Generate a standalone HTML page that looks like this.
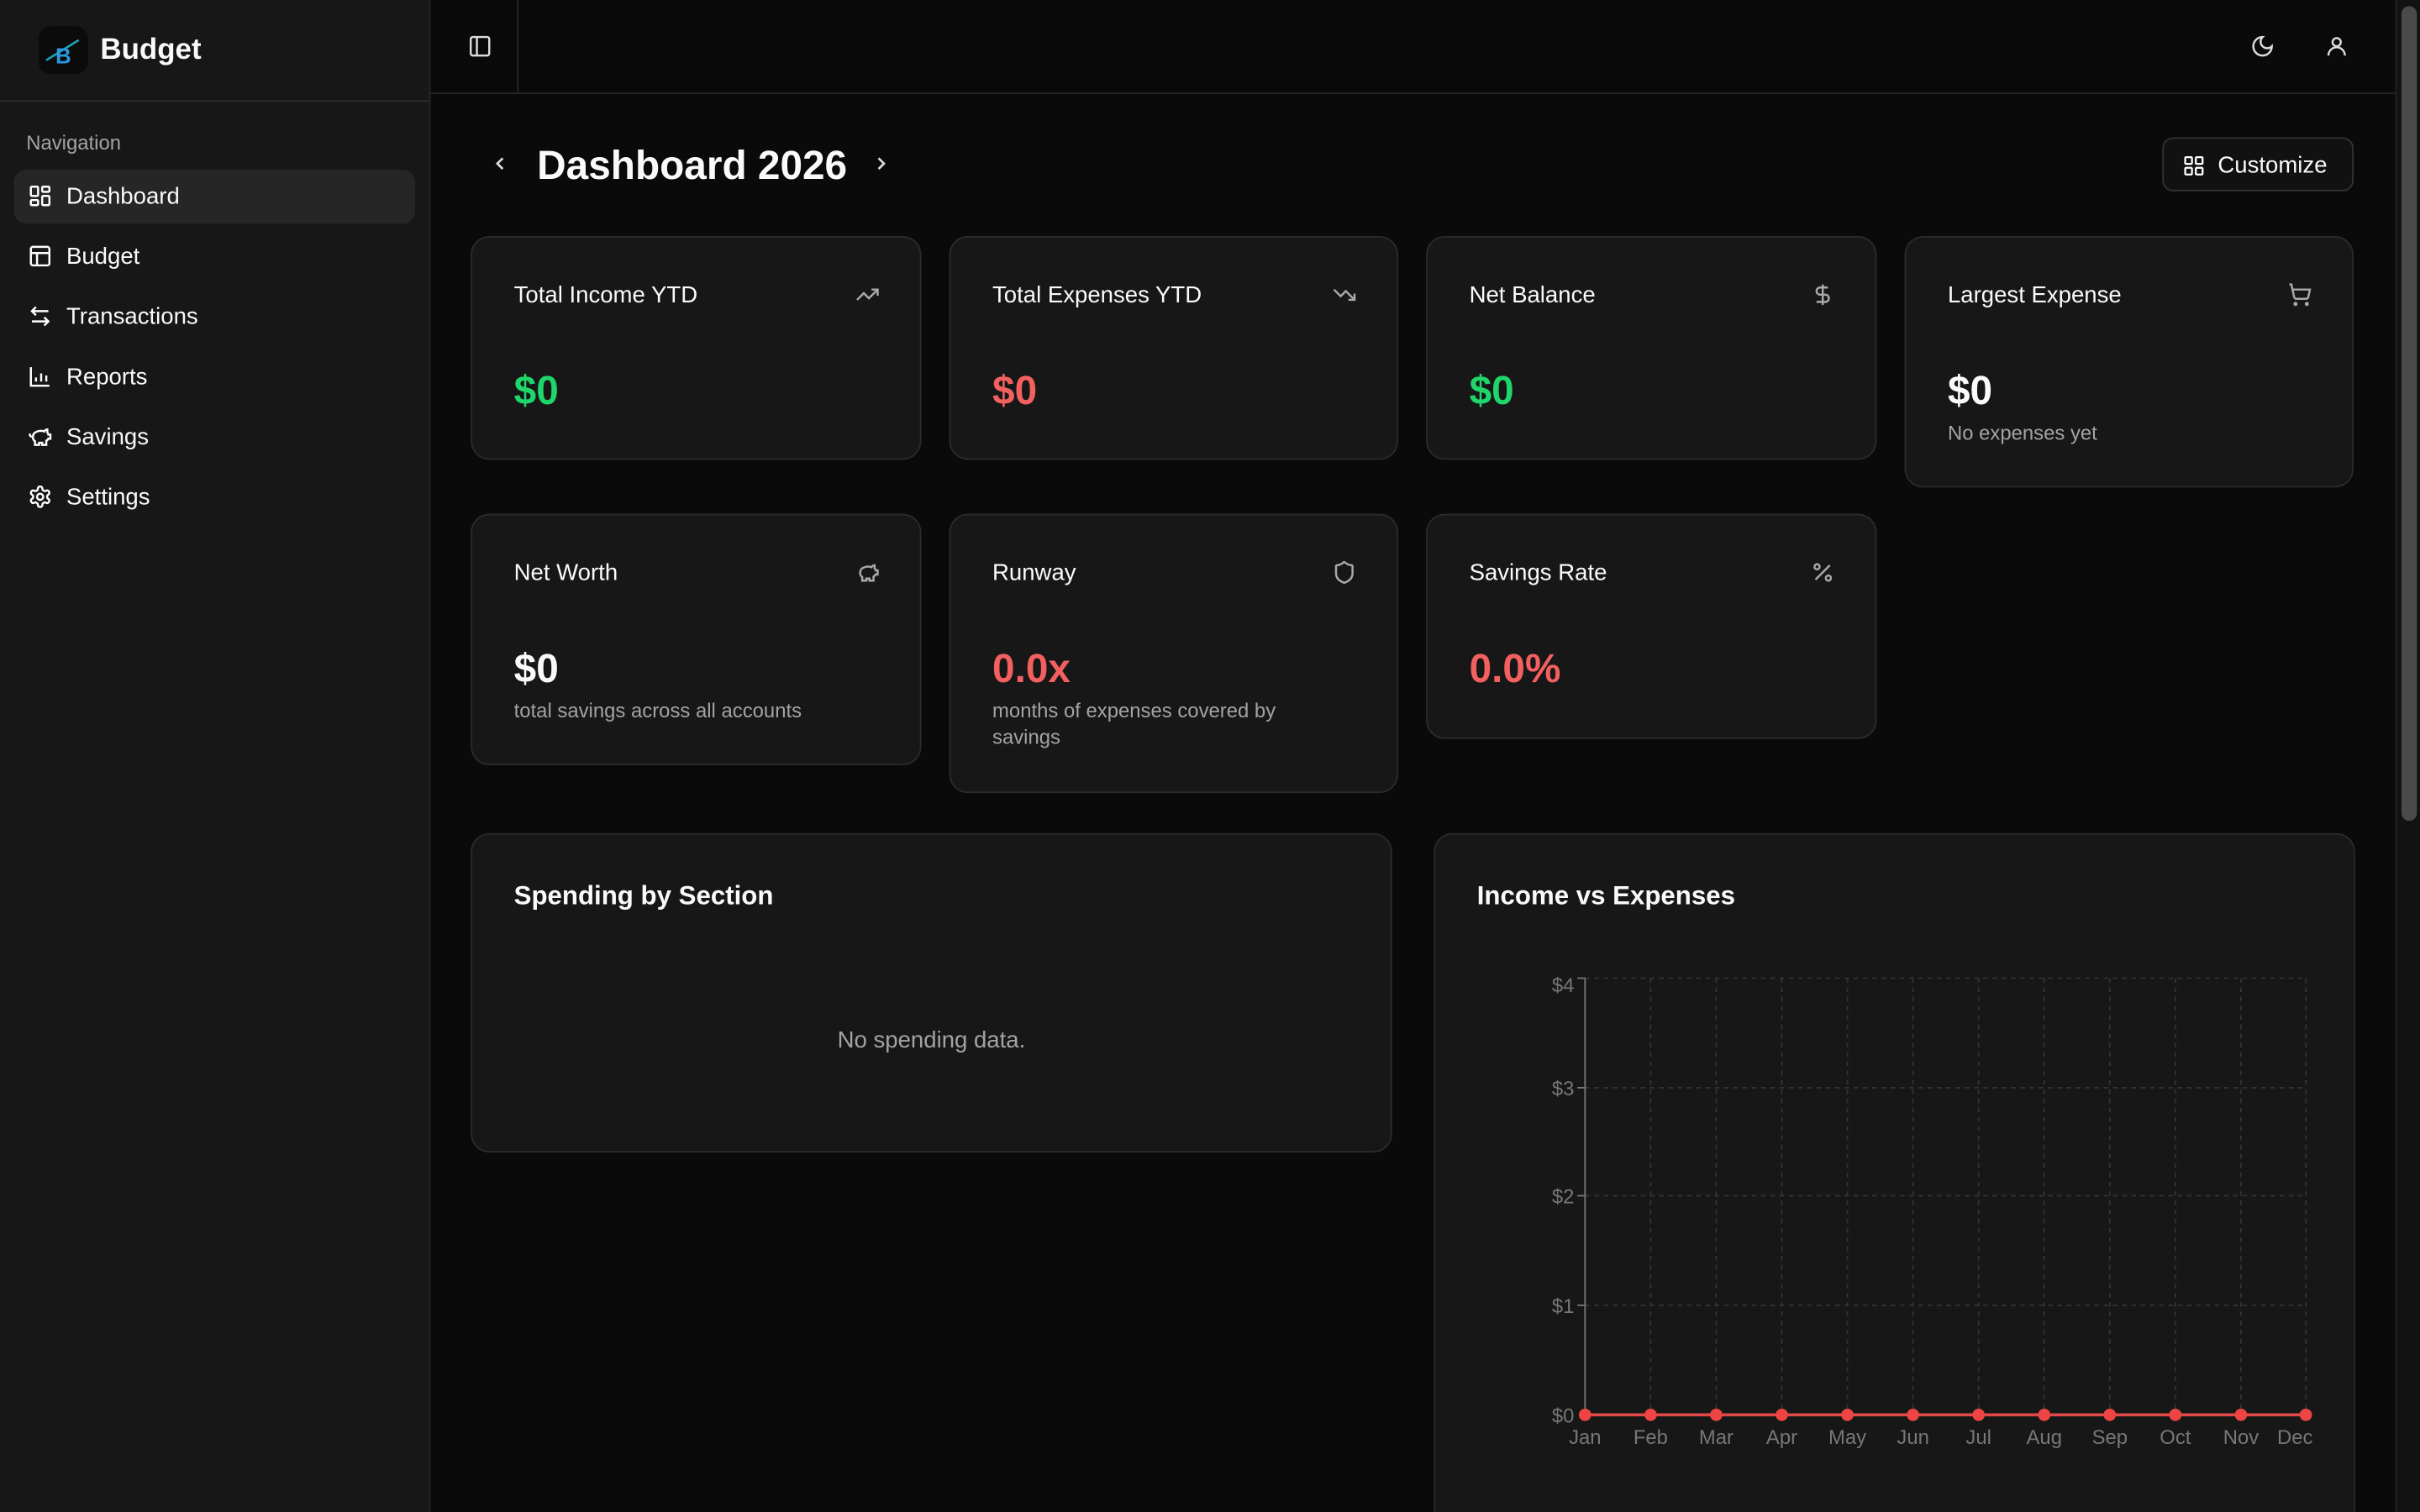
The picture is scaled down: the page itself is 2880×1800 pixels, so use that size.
<!DOCTYPE html>
<html><head><meta charset="utf-8"><style>
*{box-sizing:border-box;margin:0;padding:0}
html,body{width:2880px;height:1800px;overflow:hidden;background:#0a0a0a}
#w{width:1568px;height:980px;transform:scale(1.836735);transform-origin:0 0;position:relative;font-family:"Liberation Sans",sans-serif;color:#fafafa;background:#0a0a0a}
.sb{position:absolute;left:0;top:0;width:279px;height:980px;background:#171717;border-right:1px solid #262626}
.logo{position:absolute;left:25px;top:17px;width:32px;height:31px;background:#0b0b0b;border-radius:8px}
.brand{position:absolute;left:65px;top:22px;font-size:19px;font-weight:bold}
.sbline{position:absolute;left:0;top:65px;width:278px;border-top:1px solid #2e2e2e}
.navl{position:absolute;left:17px;top:85px;font-size:13px;color:#a3a3a3}
.it{position:absolute;left:9px;width:260px;height:35px;border-radius:8px;font-size:15px;display:flex;align-items:center;padding-left:34px}
.it svg{position:absolute;left:9px;top:9px}
.act{background:#262626}
.hdr{position:absolute;left:279px;top:0;right:16px;height:61px;border-bottom:1px solid #262626}
.card{position:absolute;background:#171717;border:1px solid #2b2b2b;border-radius:12px}
.ct{position:absolute;left:27px;top:29px;font-size:15px}
.cv{position:absolute;left:27px;top:84px;font-size:26px;font-weight:bold}
.cs{position:absolute;left:27px;top:118px;font-size:13px;color:#a3a3a3;line-height:17px}
.ci{position:absolute;right:26px;top:29px}
.g{color:#1fd66a}.r{color:#f36060}
.scroll{position:absolute;right:0;top:0;width:16px;height:980px;background:#121212;border-left:1px solid #222}
.thumb{position:absolute;left:3px;top:4px;width:10px;height:528px;border-radius:5px;background:#4a4a4a}
</style></head><body><div id="w">
<div class="sb">
 <div class="logo"><svg width="32" height="31" viewBox="0 0 32 31"><line x1="5" y1="22" x2="26" y2="9" stroke="#1aa0b0" stroke-width="1.5"/><text x="11" y="24" font-size="14" font-weight="bold" fill="#2a9ae0" font-family="Liberation Sans">B</text></svg></div>
 <div class="brand">Budget</div>
 <div class="sbline"></div>
 <div class="navl">Navigation</div>
 <div class="it act" style="top:110px"><svg width="16" height="16" viewBox="0 0 24 24" fill="none" stroke="#fff" stroke-width="2"><rect x="3" y="3" width="7" height="9" rx="1"/><rect x="14" y="3" width="7" height="5" rx="1"/><rect x="14" y="12" width="7" height="9" rx="1"/><rect x="3" y="16" width="7" height="5" rx="1"/></svg>Dashboard</div>
 <div class="it" style="top:149px"><svg width="16" height="16" viewBox="0 0 24 24" fill="none" stroke="#fff" stroke-width="2"><rect x="3" y="3" width="18" height="18" rx="2"/><path d="M3 9h18M9 9v12"/></svg>Budget</div>
 <div class="it" style="top:188px"><svg width="16" height="16" viewBox="0 0 24 24" fill="none" stroke="#fff" stroke-width="2"><path d="M8 3 4 7l4 4M4 7h16M16 21l4-4-4-4M20 17H4"/></svg>Transactions</div>
 <div class="it" style="top:227px"><svg width="16" height="16" viewBox="0 0 24 24" fill="none" stroke="#fff" stroke-width="2"><path d="M3 3v18h18M8 17v-4M13 17V9M18 17v-6"/></svg>Reports</div>
 <div class="it" style="top:266px"><svg width="16" height="16" viewBox="0 0 24 24" fill="none" stroke="#fff" stroke-width="2"><path d="M19 5c-1.5 0-2.8 1.4-3 2-3.5-1.5-11-.3-11 5 0 1.8 0 3 2 4.5V20h4v-2h3v2h4v-4c1-.5 1.7-1 2-2h2v-4h-2c0-1-.5-1.5-1-2V5zM2 9v1c0 1.1.9 2 2 2h1"/></svg>Savings</div>
 <div class="it" style="top:305px"><svg width="16" height="16" viewBox="0 0 24 24" fill="none" stroke="#fff" stroke-width="2"><circle cx="12" cy="12" r="3"/><path d="M12.2 2h-.4a2 2 0 0 0-2 2v.2a2 2 0 0 1-1 1.7l-.4.3a2 2 0 0 1-2 0l-.2-.1a2 2 0 0 0-2.7.7l-.2.4a2 2 0 0 0 .7 2.7l.2.1a2 2 0 0 1 1 1.7v.5a2 2 0 0 1-1 1.7l-.2.1a2 2 0 0 0-.7 2.7l.2.4a2 2 0 0 0 2.7.7l.2-.1a2 2 0 0 1 2 0l.4.3a2 2 0 0 1 1 1.7v.2a2 2 0 0 0 2 2h.4a2 2 0 0 0 2-2v-.2a2 2 0 0 1 1-1.7l.4-.3a2 2 0 0 1 2 0l.2.1a2 2 0 0 0 2.7-.7l.2-.4a2 2 0 0 0-.7-2.7l-.2-.1a2 2 0 0 1-1-1.7v-.5a2 2 0 0 1 1-1.7l.2-.1a2 2 0 0 0 .7-2.7l-.2-.4a2 2 0 0 0-2.7-.7l-.2.1a2 2 0 0 1-2 0l-.4-.3a2 2 0 0 1-1-1.7V4a2 2 0 0 0-2-2z"/></svg>Settings</div>
</div>
<div class="hdr">
 <div style="position:absolute;left:56px;top:0;height:60px;border-left:1px solid #262626"></div>
 <svg style="position:absolute;left:24px;top:22px" width="16" height="16" viewBox="0 0 24 24" fill="none" stroke="#ddd" stroke-width="2"><rect x="3" y="3" width="18" height="18" rx="2"/><path d="M9 3v18"/></svg>
 <svg style="position:absolute;left:1179px;top:22px" width="16" height="16" viewBox="0 0 24 24" fill="none" stroke="#ddd" stroke-width="2"><path d="M12 3a6 6 0 0 0 9 9 9 9 0 1 1-9-9z"/></svg>
 <svg style="position:absolute;left:1227px;top:22px" width="16" height="16" viewBox="0 0 24 24" fill="none" stroke="#ddd" stroke-width="2"><circle cx="12" cy="8" r="4"/><path d="M20 21a8 8 0 0 0-16 0"/></svg>
</div>
<svg style="position:absolute;left:317px;top:99px" width="14" height="14" viewBox="0 0 24 24" fill="none" stroke="#ddd" stroke-width="2.5"><path d="m15 18-6-6 6-6"/></svg>
<div style="position:absolute;left:348px;top:92px;font-size:26px;font-weight:bold">Dashboard 2026</div>
<svg style="position:absolute;left:564px;top:99px" width="14" height="14" viewBox="0 0 24 24" fill="none" stroke="#ddd" stroke-width="2.5"><path d="m9 18 6-6-6-6"/></svg>
<div style="position:absolute;left:1401px;top:89px;width:124px;height:35px;border:1px solid #333;border-radius:7px;background:#111;font-size:15px;padding:9px 0 0 35px">Customize<svg style="position:absolute;left:12px;top:10px" width="15" height="15" viewBox="0 0 24 24" fill="none" stroke="#fff" stroke-width="2"><rect x="3" y="3" width="7" height="7" rx="1"/><rect x="14" y="3" width="7" height="7" rx="1"/><rect x="3" y="14" width="7" height="7" rx="1"/><rect x="14" y="14" width="7" height="7" rx="1"/></svg></div>

<div class="card" style="left:305px;top:153px;width:292px;height:145px"><div class="ct">Total Income YTD</div><svg class="ci" width="16" height="16" viewBox="0 0 24 24" fill="none" stroke="#aaa" stroke-width="2"><path d="m22 7-8.5 8.5-5-5L2 17M16 7h6v6"/></svg><div class="cv g">$0</div></div>
<div class="card" style="left:615px;top:153px;width:291px;height:145px"><div class="ct">Total Expenses YTD</div><svg class="ci" width="16" height="16" viewBox="0 0 24 24" fill="none" stroke="#aaa" stroke-width="2"><path d="m22 17-8.5-8.5-5 5L2 7M16 17h6v-6"/></svg><div class="cv r">$0</div></div>
<div class="card" style="left:924px;top:153px;width:292px;height:145px"><div class="ct">Net Balance</div><svg class="ci" width="16" height="16" viewBox="0 0 24 24" fill="none" stroke="#aaa" stroke-width="2"><path d="M12 2v20M17 5H9.5a3.5 3.5 0 0 0 0 7h5a3.5 3.5 0 0 1 0 7H6"/></svg><div class="cv g">$0</div></div>
<div class="card" style="left:1234px;top:153px;width:291px;height:163px"><div class="ct">Largest Expense</div><svg class="ci" width="16" height="16" viewBox="0 0 24 24" fill="none" stroke="#aaa" stroke-width="2"><circle cx="8" cy="21" r="1"/><circle cx="19" cy="21" r="1"/><path d="M2 2h2l2.7 12.4a2 2 0 0 0 2 1.6h9.7a2 2 0 0 0 2-1.6L22 7H5"/></svg><div class="cv">$0</div><div class="cs">No expenses yet</div></div>

<div class="card" style="left:305px;top:333px;width:292px;height:163px"><div class="ct">Net Worth</div><svg class="ci" width="16" height="16" viewBox="0 0 24 24" fill="none" stroke="#aaa" stroke-width="2"><path d="M19 5c-1.5 0-2.8 1.4-3 2-3.5-1.5-11-.3-11 5 0 1.8 0 3 2 4.5V20h4v-2h3v2h4v-4c1-.5 1.7-1 2-2h2v-4h-2c0-1-.5-1.5-1-2V5z"/></svg><div class="cv">$0</div><div class="cs">total savings across all accounts</div></div>
<div class="card" style="left:615px;top:333px;width:291px;height:181px"><div class="ct">Runway</div><svg class="ci" width="16" height="16" viewBox="0 0 24 24" fill="none" stroke="#aaa" stroke-width="2"><path d="M20 13c0 5-3.5 7.5-7.7 9a1 1 0 0 1-.7 0C7.5 20.5 4 18 4 13V6a1 1 0 0 1 1-1c2 0 4.5-1.2 6.2-2.7a1.2 1.2 0 0 1 1.5 0C14.5 3.8 17 5 19 5a1 1 0 0 1 1 1z"/></svg><div class="cv r">0.0x</div><div class="cs">months of expenses covered by<br>savings</div></div>
<div class="card" style="left:924px;top:333px;width:292px;height:146px"><div class="ct">Savings Rate</div><svg class="ci" width="16" height="16" viewBox="0 0 24 24" fill="none" stroke="#aaa" stroke-width="2"><path d="M19 5 5 19"/><circle cx="6.5" cy="6.5" r="2.5"/><circle cx="17.5" cy="17.5" r="2.5"/></svg><div class="cv r">0.0%</div></div>

<div class="card" style="left:305px;top:540px;width:597px;height:207px"><div class="ct" style="top:30px;font-size:17px;font-weight:bold">Spending by Section</div><div style="position:absolute;left:0;right:0;top:125px;text-align:center;font-size:15px;color:#a3a3a3">No spending data.</div></div>
<div class="card" style="left:929px;top:540px;width:597px;height:460px"><div class="ct" style="top:30px;font-size:17px;font-weight:bold">Income vs Expenses</div>
<svg style="position:absolute;left:0;top:0" width="597" height="460" font-family="Liberation Sans" font-size="13" fill="#777">
<g stroke="#333" stroke-dasharray="3 3">
<line x1="97" y1="93" x2="564" y2="93"/><line x1="97" y1="164" x2="564" y2="164"/><line x1="97" y1="234" x2="564" y2="234"/><line x1="97" y1="305" x2="564" y2="305"/>
<line x1="139.5" y1="93" x2="139.5" y2="376"/><line x1="182" y1="93" x2="182" y2="376"/><line x1="224.5" y1="93" x2="224.5" y2="376"/><line x1="267" y1="93" x2="267" y2="376"/><line x1="309.5" y1="93" x2="309.5" y2="376"/><line x1="352" y1="93" x2="352" y2="376"/><line x1="394.5" y1="93" x2="394.5" y2="376"/><line x1="437" y1="93" x2="437" y2="376"/><line x1="479.5" y1="93" x2="479.5" y2="376"/><line x1="522" y1="93" x2="522" y2="376"/><line x1="564" y1="93" x2="564" y2="376"/>
</g>
<g stroke="#777"><line x1="97" y1="93" x2="97" y2="376"/><line x1="92" y1="93" x2="97" y2="93"/><line x1="92" y1="164" x2="97" y2="164"/><line x1="92" y1="234" x2="97" y2="234"/><line x1="92" y1="305" x2="97" y2="305"/></g>
<g text-anchor="end"><text x="90" y="102">$4</text><text x="90" y="169">$3</text><text x="90" y="239">$2</text><text x="90" y="310">$1</text><text x="90" y="381">$0</text></g>
<line x1="97" y1="376" x2="564" y2="376" stroke="#e04848" stroke-width="2"/>
<g fill="#ef4444"><circle cx="97" cy="376" r="4"/><circle cx="139.5" cy="376" r="4"/><circle cx="182" cy="376" r="4"/><circle cx="224.5" cy="376" r="4"/><circle cx="267" cy="376" r="4"/><circle cx="309.5" cy="376" r="4"/><circle cx="352" cy="376" r="4"/><circle cx="394.5" cy="376" r="4"/><circle cx="437" cy="376" r="4"/><circle cx="479.5" cy="376" r="4"/><circle cx="522" cy="376" r="4"/><circle cx="564" cy="376" r="4"/></g>
<g text-anchor="middle"><text x="97" y="395">Jan</text><text x="139.5" y="395">Feb</text><text x="182" y="395">Mar</text><text x="224.5" y="395">Apr</text><text x="267" y="395">May</text><text x="309.5" y="395">Jun</text><text x="352" y="395">Jul</text><text x="394.5" y="395">Aug</text><text x="437" y="395">Sep</text><text x="479.5" y="395">Oct</text><text x="522" y="395">Nov</text><text x="557" y="395">Dec</text></g>
</svg></div>
<div class="scroll"><div class="thumb"></div></div>
</div></body></html>
